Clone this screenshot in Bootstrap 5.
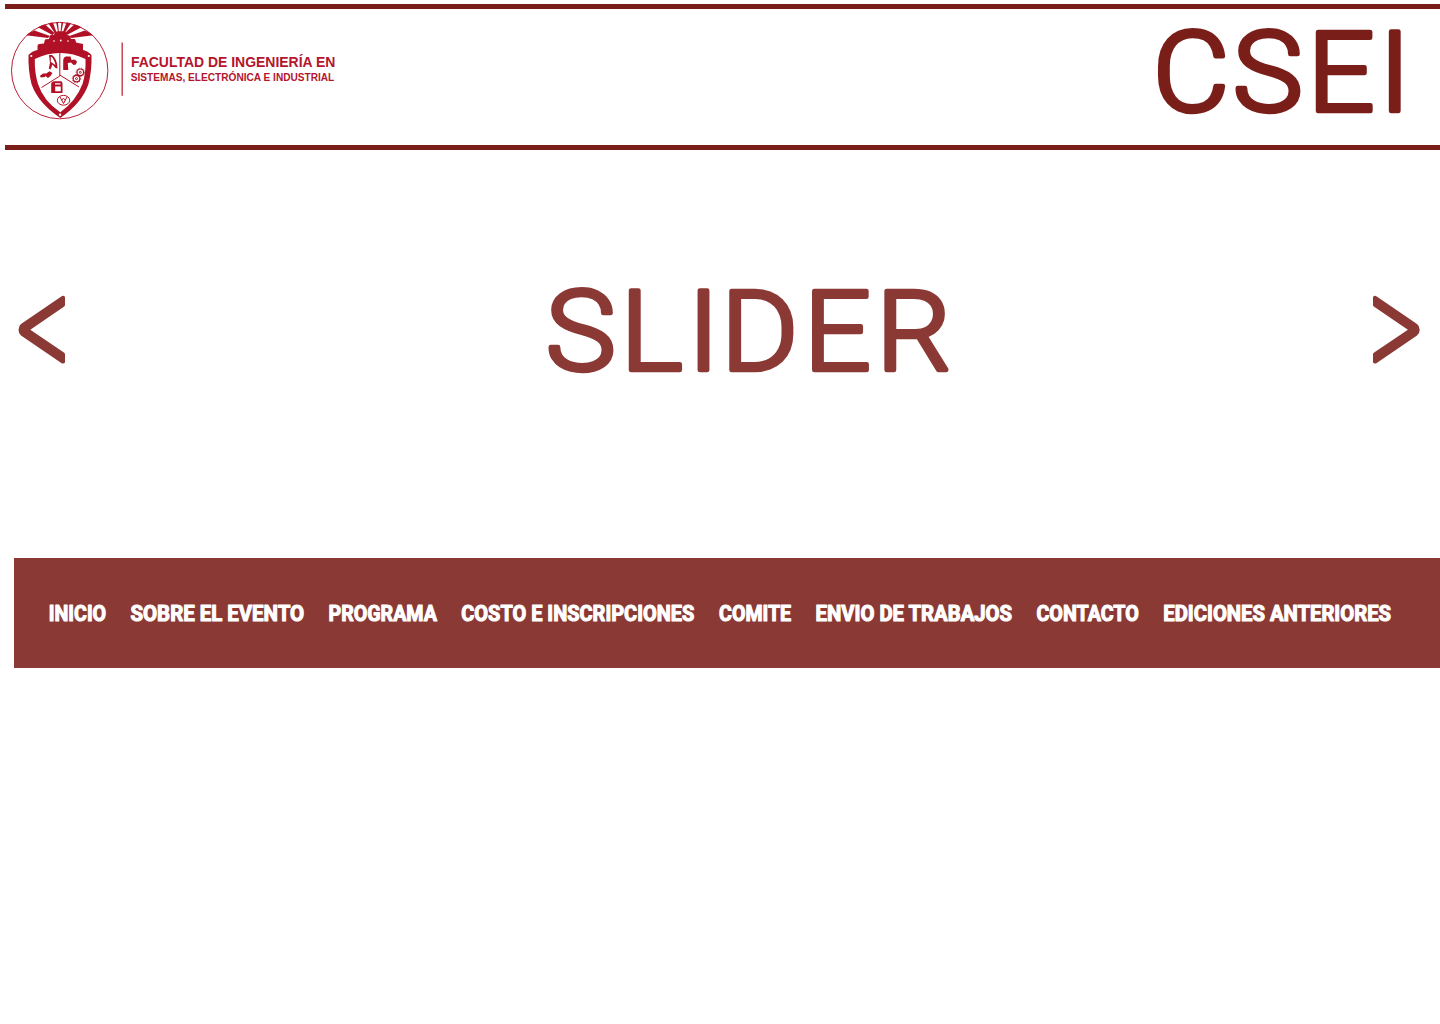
<!DOCTYPE html>
<html lang="es">
<head>
<meta charset="utf-8">
<meta name="viewport" content="width=device-width, initial-scale=1">
<title>CSEI</title>
<link href="https://cdn.jsdelivr.net/npm/bootstrap@5.3.0/dist/css/bootstrap.min.css" rel="stylesheet">
<style>
  body { background: #fff; font-family: Roboto, "Liberation Sans", sans-serif; overflow-x: hidden; }
  svg { overflow: visible; }
  .site-head { height: 146px; margin: 4px 0 0 5px; border-top: 5px solid #7a1e19; border-bottom: 5px solid #7a1e19; }
  .brand-logo { margin: 9px 0 0 3px; }
  .site-title { margin: 0 29px 0 0; }
  .big-text { font-family: Roboto, sans-serif; font-weight: 300; font-size: 111.4px; stroke-width: 4.5px; stroke-linejoin: round; }
  .big-dark { fill: #7a1e19; stroke: #7a1e19; }
  .big-soft { fill: #8b3935; stroke: #8b3935; }
  .hero-slider { height: 408px; padding: 115px 20px 0 18px; }
  .hero-slider button { line-height: 0; margin-top: 30px; }
  .hero-word { margin-left: 58px; }
  .main-menu { margin-left: 14px; height: 110px; background: #8b3935; padding: 0 0 0 35px; }
  .main-menu .nav { column-gap: 24.5px; }
  .main-menu svg { display: block; }
  .menu-text { font-family: Roboto, sans-serif; font-weight: 700; font-size: 21.2px; fill: #fff; stroke: #fff; stroke-width: 1.1px; stroke-linejoin: round; }
</style>
<script src="https://cdn.jsdelivr.net/npm/bootstrap@5.3.0/dist/js/bootstrap.bundle.min.js"></script>
</head>
<body>
<header class="site-head d-flex justify-content-between align-items-start">
  <a class="brand-logo" href="#">
    <svg class="d-block" width="332" height="108" viewBox="8 18 332 108">
      <defs><clipPath id="disc"><circle cx="59.7" cy="70.6" r="48.5"/></clipPath></defs>
      <circle cx="59.7" cy="70.6" r="48.2" fill="none" stroke="#b91f36" stroke-width="1"/>
      <g fill="#b01126">
        <g clip-path="url(#disc)">
          <path d="M24 35L34.500 30.500L50 36L48 38ZM37.500 27L43.500 23L54.500 33L52.500 35ZM47.600 22L52 20L56.400 32L55 33.500ZM55.700 20H57.700L58.900 32H58Z"/>
          <path d="M95.400 35L84.900 30.500L69.400 36L71.400 38ZM81.900 27L75.900 23L64.900 33L66.900 35ZM71.800 22L67.400 20L63 32L64.400 33.500ZM63.700 20H61.700L60.500 32H61.400Z"/>
        </g>
        <path fill-rule="evenodd" d="M54.500 33Q55.500 31.300 58 31.300H63Q65.500 31.300 66.500 33L67 35Q70 35 70.500 37L71 39H74.500Q75.500 39 76 42.500L83 44V50Q88 51 91.500 55Q92 70 88.500 84Q82 103 60.300 118Q38 103 31.500 84Q28 70 28.500 55Q32 51 37.500 50V46Q37.500 44 39.500 44L44 43.500L44.800 40Q45 39 49 39L50 35.500Q51 34.500 54 35ZM34.800 59Q47 52.800 60.200 53Q73 52.800 85.500 59Q86 73 82.500 84Q76 101 60.300 112.200Q43.500 101 38 84Q34.500 73 34.800 59Z"/>
        <path fill-rule="evenodd" d="M49 55H52Q57.500 59 57.500 68.500L55.500 68L52.500 64.500L50.500 69.500L48.800 68.500L50 63ZM50.800 56.500V62L52.500 63L55.500 65Q54 58 50.800 56.500Z"/>
        <path d="M63.200 61Q63.200 57 66 56.500L70.500 56.500L71.500 60L74.500 59.500L77 61.500L76 64.500L73.500 65L71 62.500L67.800 63L68.300 70H63.200Z"/>
        <path d="M39.800 76L43 73.500L47 73.500L45 77L41 77.500ZM45.500 74L49.500 71.300L52.500 73L50.500 76L48 78L46 76.500Z"/>
        <path d="M51.200 83L53.500 81.200H61.500L62.500 83V93H51.200ZM55.200 86.500V91.300H60.800V86.500ZM55 83.300V84.500H60.500V83.300Z" fill-rule="evenodd"/>
      </g>
      <g fill="#fff">
        <circle cx="54" cy="41" r=".8"/><circle cx="60.800" cy="40.500" r=".9"/><circle cx="68" cy="41" r=".8"/>
        <circle cx="31.300" cy="56" r="1.100"/><circle cx="88.800" cy="56" r="1.100"/><circle cx="60.100" cy="114.700" r="1.200"/>
      </g>
      <g fill="none" stroke="#b01126">
        <path stroke-width="1" d="M59.800 53V76L41.500 87.500M59.800 75L79 87"/>
        <circle cx="80.300" cy="72.300" r="3.300" stroke-width="1.200"/><circle cx="80.300" cy="72.300" r="1"/>
        <circle cx="76.500" cy="78.600" r="3.300" stroke-width="1.200"/><circle cx="76.500" cy="78.600" r="1"/>
        <circle cx="80.300" cy="72.300" r="4.200" stroke-width=".8" stroke-dasharray="1.200 1.300"/>
        <circle cx="76.500" cy="78.600" r="4.200" stroke-width=".8" stroke-dasharray="1.200 1.300"/>
        <ellipse cx="63.500" cy="100.300" rx="6.200" ry="4.900" stroke-width="1"/>
        <path stroke-width="1" d="M60 97L63.500 103.500L67 97M61.500 100L63.500 98.500L65.500 100"/>
      </g>
      <path stroke="#c23a4f" stroke-width="1.400" d="M122.200 42.500V95.700"/>
      <g fill="#b4152d" font-family="Liberation Sans, Arial, sans-serif" font-weight="700">
        <text x="130.900" y="67.200" font-size="14" textLength="204.500" lengthAdjust="spacingAndGlyphs">FACULTAD DE INGENIERÍA EN</text>
        <text x="130.800" y="80.700" font-size="10.300" textLength="203.500" lengthAdjust="spacingAndGlyphs">SISTEMAS, ELECTRÓNICA E INDUSTRIAL</text>
      </g>
    </svg>
  </a>
  <h1 class="site-title lh-1 mb-0">
    <svg class="d-block" width="260" height="136" viewBox="0 9 260 136"><text class="big-text big-dark" transform="scale(1.06 1)" y="110.900" x="1.600 77.200 147.700 215.200">CSEI</text></svg>
  </h1>
</header>

<section class="hero-slider d-flex justify-content-between align-items-start">
  <button class="btn p-0 border-0" type="button" aria-label="Anterior">
    <svg width="48" height="70" viewBox="18 295 48 70" fill="#8b3935"><path d="M65 297Q63.500 295 61.300 296.500L21 324Q18.500 326 18.500 329.700Q18.500 333.400 21 335.400L61.300 363Q63.500 364.400 65 362.500V354Q65 353.300 63.500 352.300L30.300 329.800L63.500 307Q65 306 65 305.300Z"/></svg>
  </button>
  <svg class="hero-word d-block" width="410" height="140" viewBox="0 265 410 140"><text class="big-text big-soft" transform="scale(1.06 1)" y="369.900" x="2.600 73.200 136.500 168 246 314.500">SLIDER</text></svg>
  <button class="btn p-0 border-0" type="button" aria-label="Siguiente">
    <svg width="48" height="70" viewBox="1372 295 48 70" fill="#8b3935"><path d="M1373 297Q1374.500 295 1376.700 296.500L1417 324Q1419.700 326 1419.700 329.700Q1419.700 333.400 1417 335.400L1376.700 363Q1374.500 364.400 1373 362.500V354Q1373 353.300 1374.500 352.300L1407.900 329.800L1374.500 307Q1373 306 1373 305.300Z"/></svg>
  </button>
</section>

<nav class="main-menu d-flex align-items-center">
  <div class="nav flex-nowrap">
    <a href="#"><svg width="57" height="30"><text class="menu-text" x="-.2" y="23" textLength="57.300" lengthAdjust="spacingAndGlyphs">INICIO</text></svg></a>
    <a href="#"><svg width="174" height="30"><text class="menu-text" x="-.5" y="23" textLength="173.600" lengthAdjust="spacingAndGlyphs">SOBRE EL EVENTO</text></svg></a>
    <a href="#"><svg width="108.500" height="30"><text class="menu-text" x="-.5" y="23" textLength="108.400" lengthAdjust="spacingAndGlyphs">PROGRAMA</text></svg></a>
    <a href="#"><svg width="233" height="30"><text class="menu-text" x="-.7" y="23" textLength="233" lengthAdjust="spacingAndGlyphs">COSTO E INSCRIPCIONES</text></svg></a>
    <a href="#"><svg width="72" height="30"><text class="menu-text" x="-.9" y="23" textLength="72" lengthAdjust="spacingAndGlyphs">COMITE</text></svg></a>
    <a href="#"><svg width="196.500" height="30"><text class="menu-text" x="-.5" y="23" textLength="196.600" lengthAdjust="spacingAndGlyphs">ENVIO DE TRABAJOS</text></svg></a>
    <a href="#"><svg width="102" height="30"><text class="menu-text" x="-.5" y="23" textLength="102.200" lengthAdjust="spacingAndGlyphs">CONTACTO</text></svg></a>
    <a href="#"><svg width="229" height="30"><text class="menu-text" x="-.7" y="23" textLength="227.700" lengthAdjust="spacingAndGlyphs">EDICIONES ANTERIORES</text></svg></a>
  </div>
</nav>
</body>
</html>
